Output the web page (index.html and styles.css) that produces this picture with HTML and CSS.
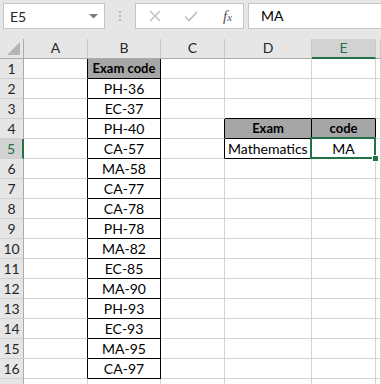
FILE: index.html
```html
<!DOCTYPE html>
<html>
<head>
<meta charset="utf-8">
<link rel="stylesheet" href="styles.css">
</head>
<body>
<div class="app">
  <div class="toolbar">
    <div class="namebox">
      <span class="nb-text">E5</span>
      <svg class="nb-arrow" width="9" height="5" viewBox="0 0 9 5"><polygon points="0,0 9,0 4.5,4.5" fill="#7b7b7b"/></svg>
    </div>
    <div class="dots"><i></i><i></i><i></i></div>
    <div class="fbtns">
      <svg class="ic-x" width="12" height="12" viewBox="0 0 12 12"><path d="M1 1 L11 11 M11 1 L1 11" stroke="#bdbdbd" stroke-width="1.4" fill="none"/></svg>
      <svg class="ic-check" width="14" height="11" viewBox="0 0 14 11"><path d="M1 5.5 L5 9.5 L13 1" stroke="#bdbdbd" stroke-width="1.6" fill="none"/></svg>
      <span class="fx">f<span class="fx-x">x</span></span>
    </div>
    <div class="finput">MA</div>
  </div>

  <div class="sheet">
    <div class="row hdr">
      <div class="corner"><svg width="14" height="14" viewBox="0 0 14 14"><polygon points="0,13 13,0 13,13" fill="#b4b4b4"/></svg></div>
      <div class="ch">A</div><div class="ch">B</div><div class="ch">C</div><div class="ch">D</div><div class="ch ch-sel">E</div><div class="ch"></div>
    </div>

    <div class="row"><div class="rh">1</div><div class="c bk-r"></div><div class="c bk-r bk-b hd ctr">Exam code</div><div class="c"></div><div class="c"></div><div class="c"></div><div class="c"></div></div>
    <div class="row"><div class="rh">2</div><div class="c bk-r"></div><div class="c bk-r bk-b ctr">PH-36</div><div class="c"></div><div class="c"></div><div class="c"></div><div class="c"></div></div>
    <div class="row"><div class="rh">3</div><div class="c bk-r"></div><div class="c bk-r bk-b ctr">EC-37</div><div class="c"></div><div class="c bk-b"></div><div class="c bk-b"></div><div class="c"></div></div>
    <div class="row"><div class="rh">4</div><div class="c bk-r"></div><div class="c bk-r bk-b ctr">PH-40</div><div class="c bk-r"></div><div class="c bk-r bk-b hd ctr">Exam</div><div class="c bk-r bk-b hd ctr">code</div><div class="c"></div></div>
    <div class="row"><div class="rh rh-sel">5</div><div class="c bk-r"></div><div class="c bk-r bk-b ctr">CA-57</div><div class="c bk-r"></div><div class="c bk-r bk-b lft">Mathematics</div><div class="c bk-r bk-b ctr active">MA<span class="selbox"><span class="handle"></span></span></div><div class="c"></div></div>
    <div class="row"><div class="rh">6</div><div class="c bk-r"></div><div class="c bk-r bk-b ctr">MA-58</div><div class="c"></div><div class="c"></div><div class="c"></div><div class="c"></div></div>
    <div class="row"><div class="rh">7</div><div class="c bk-r"></div><div class="c bk-r bk-b ctr">CA-77</div><div class="c"></div><div class="c"></div><div class="c"></div><div class="c"></div></div>
    <div class="row"><div class="rh">8</div><div class="c bk-r"></div><div class="c bk-r bk-b ctr">CA-78</div><div class="c"></div><div class="c"></div><div class="c"></div><div class="c"></div></div>
    <div class="row"><div class="rh">9</div><div class="c bk-r"></div><div class="c bk-r bk-b ctr">PH-78</div><div class="c"></div><div class="c"></div><div class="c"></div><div class="c"></div></div>
    <div class="row"><div class="rh">10</div><div class="c bk-r"></div><div class="c bk-r bk-b ctr">MA-82</div><div class="c"></div><div class="c"></div><div class="c"></div><div class="c"></div></div>
    <div class="row"><div class="rh">11</div><div class="c bk-r"></div><div class="c bk-r bk-b ctr">EC-85</div><div class="c"></div><div class="c"></div><div class="c"></div><div class="c"></div></div>
    <div class="row"><div class="rh">12</div><div class="c bk-r"></div><div class="c bk-r bk-b ctr">MA-90</div><div class="c"></div><div class="c"></div><div class="c"></div><div class="c"></div></div>
    <div class="row"><div class="rh">13</div><div class="c bk-r"></div><div class="c bk-r bk-b ctr">PH-93</div><div class="c"></div><div class="c"></div><div class="c"></div><div class="c"></div></div>
    <div class="row"><div class="rh">14</div><div class="c bk-r"></div><div class="c bk-r bk-b ctr">EC-93</div><div class="c"></div><div class="c"></div><div class="c"></div><div class="c"></div></div>
    <div class="row"><div class="rh">15</div><div class="c bk-r"></div><div class="c bk-r bk-b ctr">MA-95</div><div class="c"></div><div class="c"></div><div class="c"></div><div class="c"></div></div>
    <div class="row"><div class="rh">16</div><div class="c bk-r"></div><div class="c bk-r bk-b ctr">CA-97</div><div class="c"></div><div class="c"></div><div class="c"></div><div class="c"></div></div>
    <div class="row"><div class="rh"></div><div class="c"></div><div class="c"></div><div class="c"></div><div class="c"></div><div class="c"></div><div class="c"></div></div>
  </div>
</div>
</body>
</html>
```

FILE: styles.css
```css
* { box-sizing: border-box; }
html, body { margin: 0; padding: 0; }
body {
  width: 381px;
  height: 384px;
  overflow: hidden;
  background: #e6e6e6;
  font-family: Lato, "Open Sans", sans-serif;
  color: #000;
}
.app { width: 381px; height: 384px; overflow: hidden; }

/* toolbar */
.toolbar {
  height: 39px;
  display: flex;
  align-items: flex-start;
  padding-top: 3px;
  background: #e6e6e6;
}
.namebox {
  margin-left: 3px;
  width: 102px;
  height: 26px;
  background: #fff;
  border: 1px solid #c6c6c6;
  display: flex;
  align-items: center;
  justify-content: space-between;
  padding: 0 6px 0 6px;
}
.nb-text { font-size: 14px; color: #262626; }
.nb-arrow { display: block; margin-top: 1px; }
.dots {
  width: 30px;
  height: 26px;
  display: flex;
  flex-direction: column;
  align-items: center;
  justify-content: center;
  gap: 2px;
}
.dots i { display: block; width: 2px; height: 2px; background: #b4b4b4; }
.fbtns {
  width: 109px;
  height: 26px;
  background: #fff;
  border: 1px solid #c6c6c6;
  display: flex;
  align-items: center;
  padding-left: 13px;
}
.ic-x { display: block; }
.ic-check { display: block; margin-left: 23px; margin-top: 1px; }
.fx {
  margin-left: 25px;
  font-family: "Liberation Serif", serif;
  font-style: italic;
  font-size: 15px;
  color: #555;
  line-height: 1;
}
.fx-x { font-size: 11px; }
.finput {
  margin-left: 4px;
  flex: 1;
  height: 26px;
  background: #fff;
  border: 1px solid #c6c6c6;
  border-right: none;
  font-size: 14px;
  line-height: 24px;
  padding-left: 12px;
  color: #000;
}

/* sheet */
.sheet { background: #fff; }
.row {
  display: grid;
  grid-template-columns: 24px 64px 73px 64px 87px 64px 1fr;
  height: 20px;
}
.hdr { background: #e6e6e6; }
.corner {
  border-right: 1px solid #ababab;
  border-bottom: 1px solid #ababab;
  display: flex;
  justify-content: flex-end;
  align-items: flex-end;
  padding: 0 2px 2px 0;
}
.corner svg { display: block; }
.ch {
  border-right: 1px solid #c8c8c8;
  border-bottom: 1px solid #ababab;
  text-align: center;
  font-size: 14px;
  line-height: 17px;
  color: #262626;
}
.ch-sel {
  background: #d2d2d2;
  border-bottom: 2px solid #217346;
  color: #217346;
}
.rh {
  background: #e6e6e6;
  border-right: 1px solid #ababab;
  border-bottom: 1px solid #d0d0d0;
  text-align: center;
  font-size: 14px;
  line-height: 19px;
  color: #262626;
}
.rh-sel {
  background: #d2d2d2;
  border-right: 2px solid #217346;
  color: #217346;
}
.c {
  border-right: 1px solid #d4d4d4;
  border-bottom: 1px solid #d4d4d4;
  font-size: 14px;
  line-height: 19px;
  white-space: nowrap;
}
.bk-r { border-right-color: #000; }
.bk-b { border-bottom-color: #000; }
.hd { background: #a6a6a6; font-weight: bold; font-size: 13px; }
.ctr { text-align: center; }
.lft { padding-left: 3px; }
.active { position: relative; }
.selbox {
  position: absolute;
  left: -2px;
  top: -2px;
  right: -1px;
  bottom: -1px;
  border: 2px solid #217346;
}
.handle {
  position: absolute;
  right: -5px;
  bottom: -5px;
  width: 7px;
  height: 7px;
  background: #217346;
  border: 1px solid #fff;
}
```
